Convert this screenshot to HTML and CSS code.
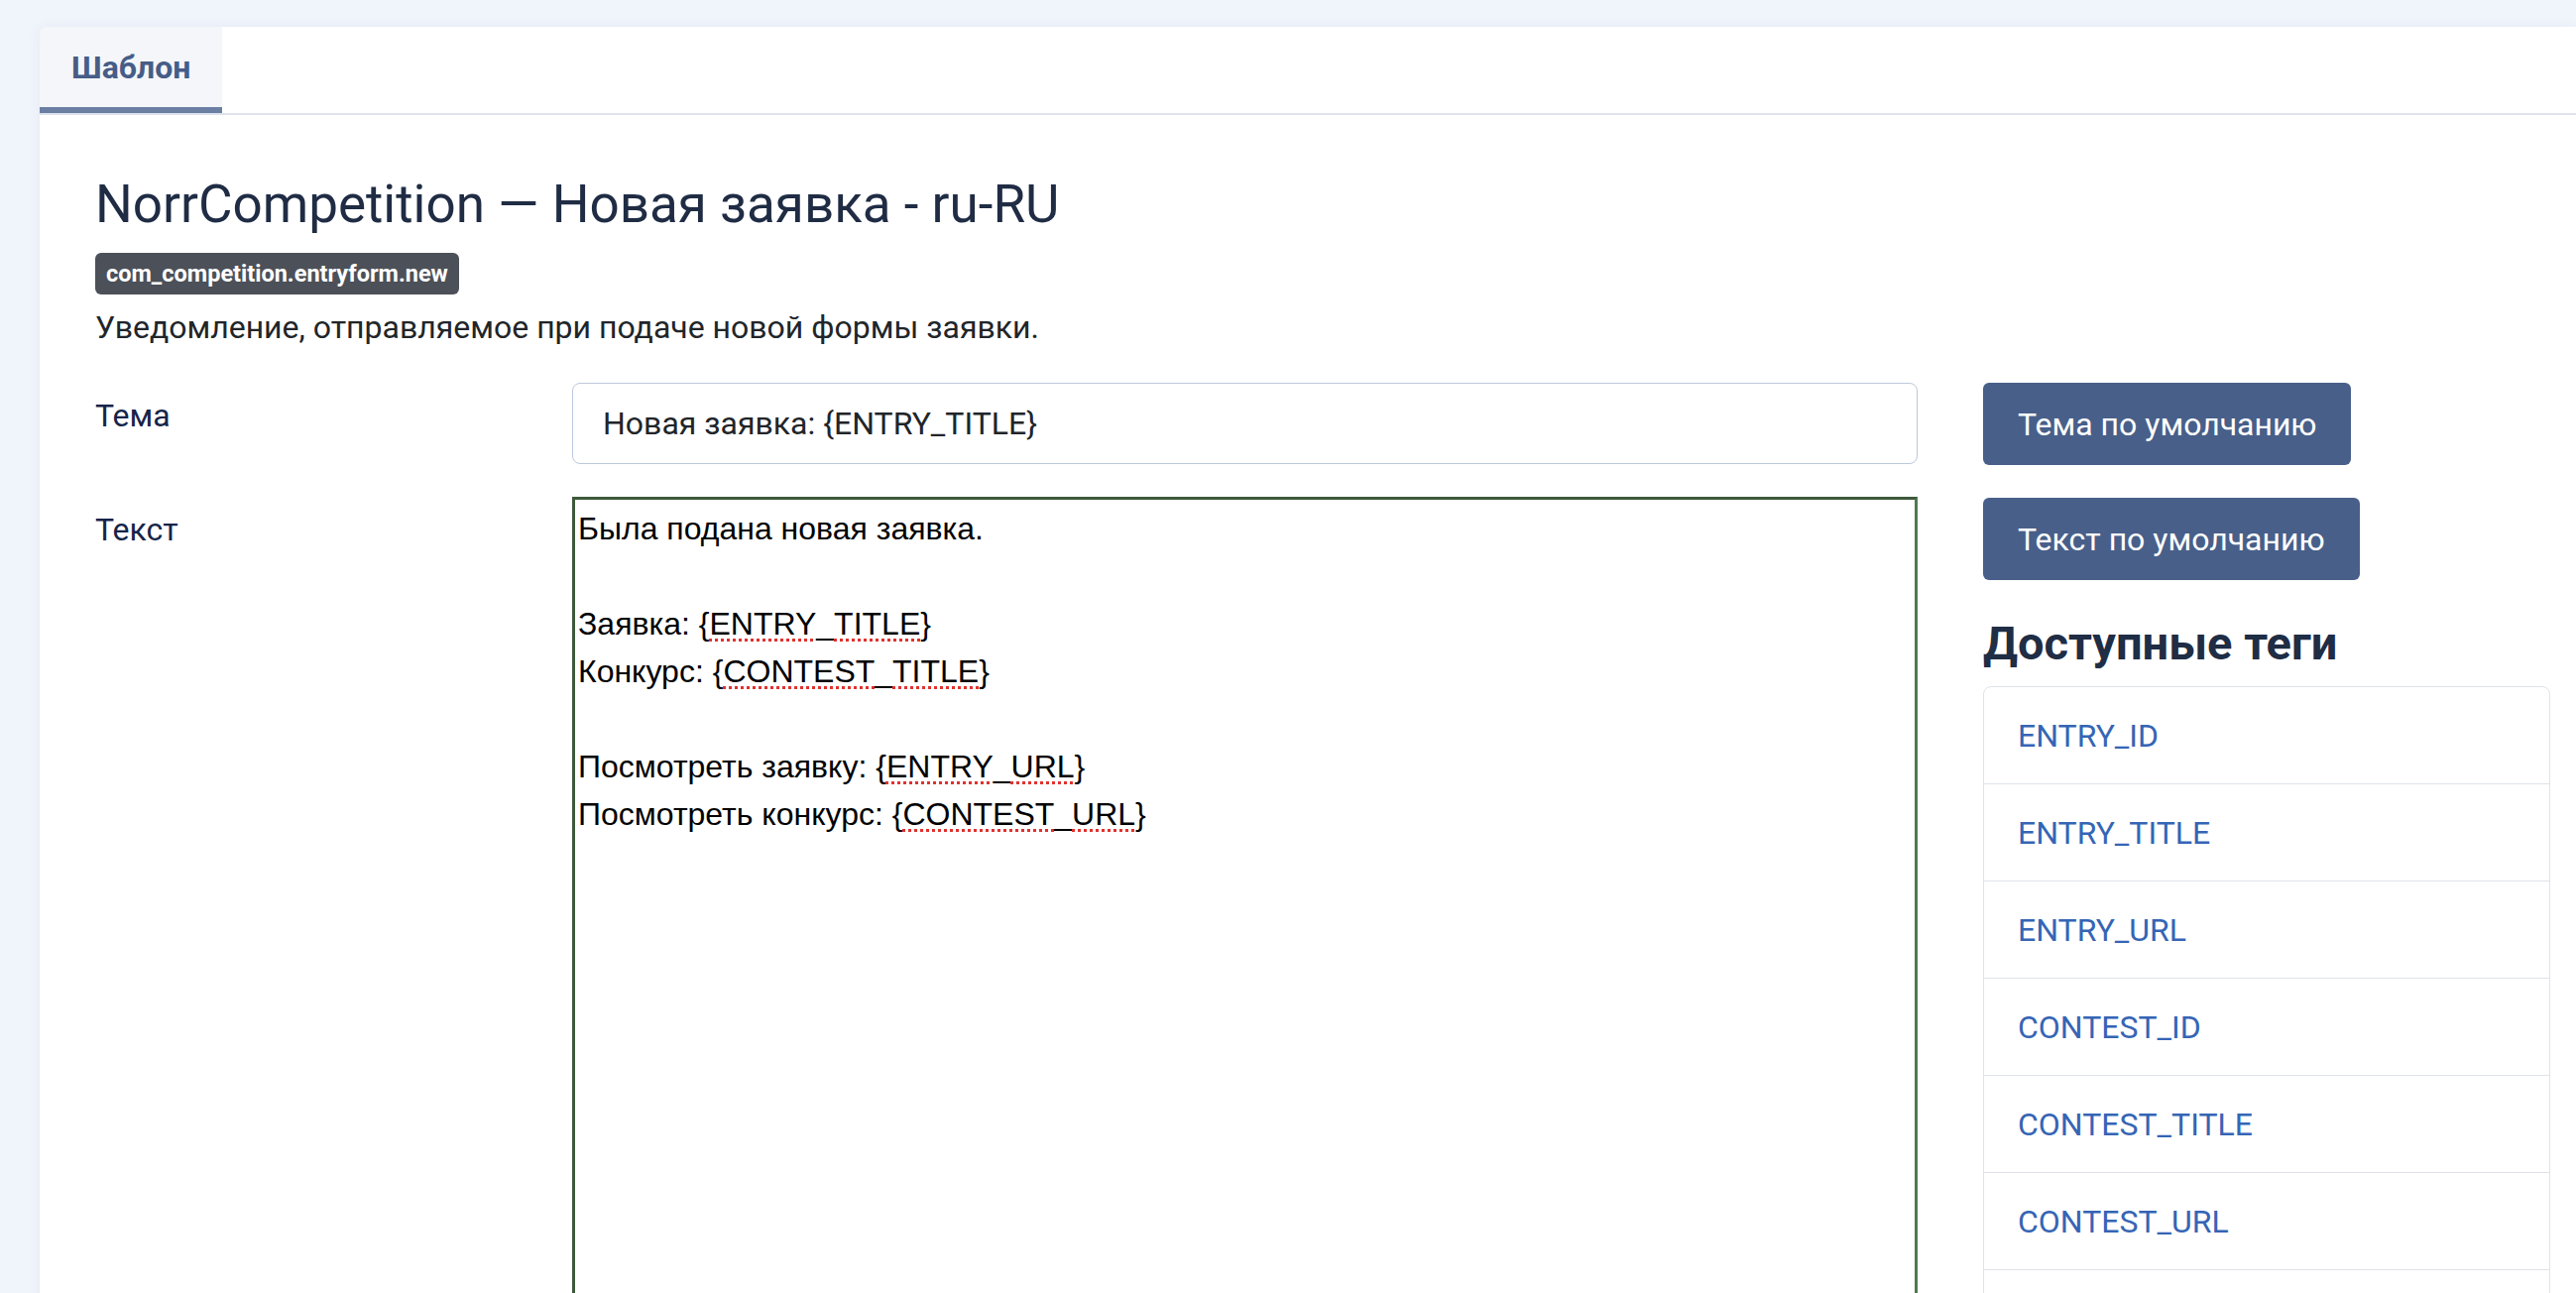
FILE: index.html
```html
<!DOCTYPE html>
<html lang="ru">
<head>
  <meta charset="UTF-8" />
  <meta name="viewport" content="width=device-width, initial-scale=1.0"/>
  <title>Шаблон письма</title>
  <link rel="stylesheet" href="styles.css">
</head>
<body>
  <div class="page">
    <div class="card">
      <div class="tabs">
        <button class="tab active">Шаблон</button>
      </div>

      <div class="tab-body">
        <h1 class="title">NorrCompetition — Новая заявка - ru-RU</h1>
        <span class="badge">com_competition.entryform.new</span>
        <p class="desc">Уведомление, отправляемое при подаче новой формы заявки.</p>

        <div class="layout">
          <div class="form">
            <div class="row">
              <label class="label" for="subject">Тема</label>
              <input class="field" id="subject" type="text" value="Новая заявка: {ENTRY_TITLE}">
            </div>
            <div class="row">
              <label class="label">Текст</label>
              <div class="editor">Была подана новая заявка.

Заявка: {<span class="typo">ENTRY</span>_<span class="typo">TITLE</span>}
Конкурс: {<span class="typo">CONTEST</span>_<span class="typo">TITLE</span>}

Посмотреть заявку: {<span class="typo">ENTRY</span>_<span class="typo">URL</span>}
Посмотреть конкурс: {<span class="typo">CONTEST</span>_<span class="typo">URL</span>}</div>
            </div>
          </div>

          <div class="side">
            <button class="btn">Тема по умолчанию</button>
            <button class="btn">Текст по умолчанию</button>
            <h2 class="side-title">Доступные теги</h2>
            <ul class="tags">
              <li><a href="#">ENTRY_ID</a></li>
              <li><a href="#">ENTRY_TITLE</a></li>
              <li><a href="#">ENTRY_URL</a></li>
              <li><a href="#">CONTEST_ID</a></li>
              <li><a href="#">CONTEST_TITLE</a></li>
              <li><a href="#">CONTEST_URL</a></li>
              <li><a href="#">SITENAME</a></li>
            </ul>
          </div>
        </div>
      </div>
    </div>
  </div>
</body>
</html>
```

FILE: styles.css
```css
body {
  margin: 0;
  font-family: Roboto, "Noto Sans", sans-serif;
  font-size: 32px;
  line-height: 1.5;
  color: #212529;
  background-color: #f0f4fb;
  overflow: hidden;
}
.page {
  padding: 27px 0 0 40px;
}
.card {
  background-color: #fff;
  border-top-left-radius: 8px;
  box-shadow: 0 0 14px rgba(60, 80, 140, 0.06);
  min-height: 1400px;
}
.tabs {
  display: flex;
  border-bottom: 2px solid #dde2ec;
}
.tab {
  font-family: Roboto, sans-serif;
  font-size: 32px;
  font-weight: 700;
  color: #465d87;
  background-color: #f4f6fa;
  border: none;
  border-top-left-radius: 8px;
  border-bottom: 6px solid #6b7fa3;
  padding: 0 32px;
  height: 87px;
  cursor: pointer;
}
.tab-body {
  padding: 59px 28px 0 56px;
}
.title {
  margin: 0;
  font-size: 53px;
  font-weight: 400;
  line-height: 62px;
  color: #1f2c44;
}
.badge {
  display: inline-block;
  margin-top: 18px;
  padding: 0 11px;
  height: 42px;
  line-height: 42px;
  font-size: 23.5px;
  font-weight: 700;
  color: #fff;
  background-color: #4c5058;
  border-radius: 6px;
}
.desc {
  margin: 11px 0 0;
  line-height: 45px;
}
.layout {
  display: grid;
  grid-template-columns: 1fr 570px;
  column-gap: 66px;
  margin-top: 33px;
}
.row {
  display: grid;
  grid-template-columns: 481px 1fr;
  margin-bottom: 33px;
}
.label {
  padding-top: 11px;
  color: #15244a;
  line-height: 45px;
}
.field {
  height: 82px;
  box-sizing: border-box;
  padding: 0 30px;
  font-family: Roboto, sans-serif;
  font-size: 32px;
  color: #212529;
  border: 1px solid #bcc8dc;
  border-radius: 8px;
  outline: none;
}
.editor {
  height: 900px;
  padding: 5px 3px;
  font-family: "Liberation Sans", Arial, sans-serif;
  font-size: 32px;
  line-height: 48px;
  color: #000;
  white-space: pre-wrap;
  border: 3px solid #3d5a3b;
  border-right-color: #4f7a52;
}
.typo {
  text-decoration: underline dotted #e0322f;
  text-decoration-thickness: 3px;
  text-underline-offset: 4px;
}
.side {
  display: flex;
  flex-direction: column;
  align-items: flex-start;
}
.btn {
  height: 83px;
  padding: 0 35px;
  margin-bottom: 33px;
  font-family: Roboto, sans-serif;
  font-size: 32px;
  color: #fff;
  background-color: #485f8a;
  border: none;
  border-radius: 6px;
  cursor: pointer;
}
.side-title {
  margin: 6px 0 18px;
  font-size: 47px;
  font-weight: 700;
  line-height: 50px;
  color: #1f2d45;
}
.tags {
  list-style: none;
  margin: 0;
  padding: 0;
  width: 100%;
  border: 1px solid #dfe3e8;
  border-radius: 8px;
}
.tags li {
  height: 97px;
  display: flex;
  align-items: center;
  padding: 0 34px;
  border-top: 1px solid #dfe3e8;
}
.tags li:first-child {
  border-top: none;
}
.tags a {
  color: #3565b5;
  text-decoration: none;
}
```
